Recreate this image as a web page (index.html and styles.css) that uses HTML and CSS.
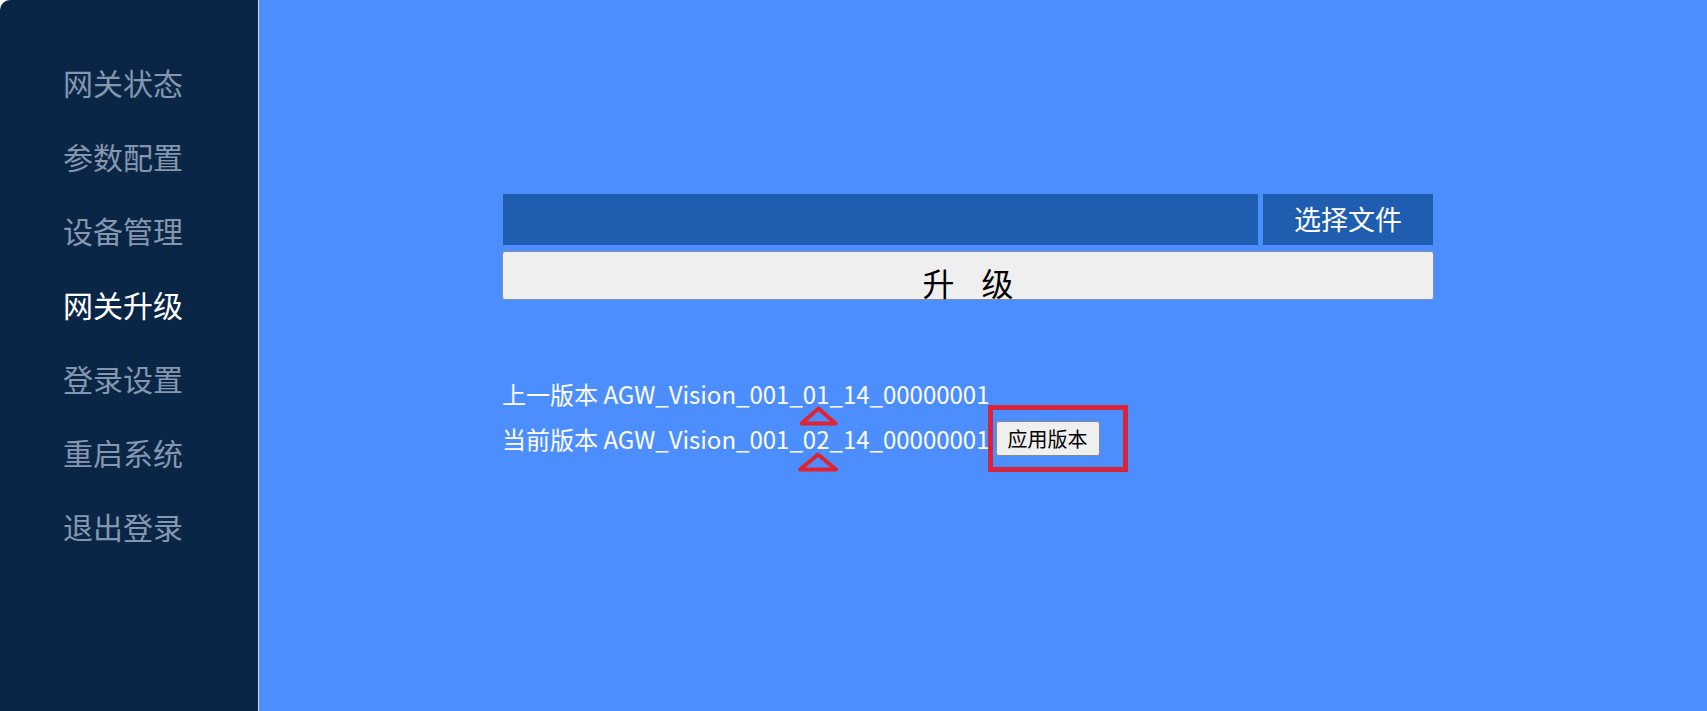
FILE: index.html
```html
<!DOCTYPE html>
<html lang="zh-CN">
<head>
<meta charset="utf-8">
<title>网关升级</title>
<link rel="stylesheet" href="styles.css">
</head>
<body>
<div class="app">
  <aside class="sidebar">
    <ul class="nav">
      <li class="nav-item">网关状态</li>
      <li class="nav-item">参数配置</li>
      <li class="nav-item">设备管理</li>
      <li class="nav-item active">网关升级</li>
      <li class="nav-item">登录设置</li>
      <li class="nav-item">重启系统</li>
      <li class="nav-item">退出登录</li>
    </ul>
  </aside>
  <main class="main">
    <section class="upgrade">
      <div class="file-row">
        <div class="file-field"></div>
        <button class="file-btn" type="button">选择文件</button>
      </div>
      <button class="upgrade-btn" type="button"><span>升</span><span>级</span></button>
      <div class="versions">
        <div class="version-line">上一版本 AGW_Vision_001_01_14_00000001</div>
        <div class="version-line version-current">
          <span>当前版本 AGW_Vision_001_02_14_00000001</span>
          <button class="apply-btn" type="button">应用版本</button>
        </div>
        <div class="mark-box"></div>
        <svg class="mark-tri mark-tri-1" viewBox="0 0 40 20" aria-hidden="true"><polygon points="20,2.5 37,17.5 3,17.5" fill="none" stroke="#e0242f" stroke-width="4" stroke-linejoin="round"/></svg>
        <svg class="mark-tri mark-tri-2" viewBox="0 0 42 20" aria-hidden="true"><polygon points="21,2.5 39,17.5 3,17.5" fill="none" stroke="#e0242f" stroke-width="4" stroke-linejoin="round"/></svg>
      </div>
    </section>
  </main>
</div>
</body>
</html>
```
FILE: styles.css
```css
html, body {
  margin: 0;
  padding: 0;
  height: 100%;
  background: #ffffff;
}
body {
  font-family: "Noto Sans CJK SC", "Noto Sans", sans-serif;
}
.app {
  display: flex;
  height: 711px;
}
.sidebar {
  width: 258px;
  flex: none;
  background: #0a2647;
  border-right: 1px solid #cfdcf2;
  border-top-left-radius: 10px;
}
.nav {
  list-style: none;
  margin: 0;
  padding: 45px 0 0 63px;
}
.nav-item {
  font-size: 30px;
  line-height: 74px;
  height: 74px;
  color: #8596ae;
  white-space: nowrap;
}
.nav-item.active {
  color: #ffffff;
}
.main {
  flex: 1;
  background: #4d8eff;
}
.upgrade {
  width: 932px;
  margin-left: 243px;
  padding-top: 194px;
}
.file-row {
  display: flex;
  gap: 5px;
  height: 51px;
}
.file-field {
  flex: 1;
  margin-left: 1px;
  background: #1f5db0;
}
.file-btn {
  width: 170px;
  margin-right: 1px;
  border: none;
  background: #1f5db0;
  color: #ffffff;
  font-family: "Noto Sans CJK SC", sans-serif;
  font-size: 27px;
  line-height: 1;
  padding: 0 0 2px;
}
.upgrade-btn {
  display: flex;
  justify-content: center;
  gap: 27px;
  box-sizing: border-box;
  width: 100%;
  height: 49px;
  margin-top: 6px;
  padding: 14px 0 0;
  background: #efefef;
  border: 1px solid #7f8fa8;
  border-radius: 3px;
  color: #000000;
  font-family: "Noto Sans CJK SC", sans-serif;
  font-size: 32px;
  line-height: 32px;
}
.versions {
  position: relative;
  margin-top: 72px;
  color: #ffffff;
  font-size: 24px;
}
.version-line {
  height: 44px;
  line-height: 44px;
  white-space: nowrap;
}
.version-current {
  display: flex;
  align-items: center;
  gap: 6px;
  height: 45px;
}
.apply-btn {
  box-sizing: border-box;
  height: 35px;
  padding: 0 11px;
  background: #efefef;
  border: 1px solid #8a8a8a;
  border-radius: 3px;
  color: #000000;
  font-family: "Noto Sans CJK SC", sans-serif;
  font-size: 20px;
  line-height: 1;
}
.mark-box {
  position: absolute;
  left: 486px;
  top: 33px;
  width: 140px;
  height: 67px;
  box-sizing: border-box;
  border: 5px solid #d6243a;
}
.mark-tri {
  position: absolute;
  height: 20px;
}
.mark-tri-1 {
  left: 296px;
  top: 34px;
  width: 41px;
}
.mark-tri-2 {
  left: 295px;
  top: 80px;
  width: 42px;
}
```
